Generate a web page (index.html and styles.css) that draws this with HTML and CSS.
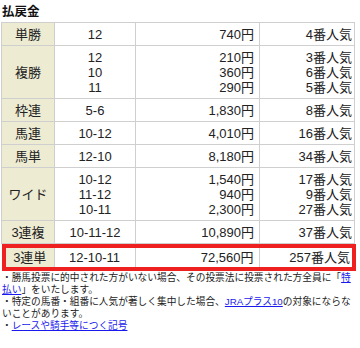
FILE: index.html
```html
<!DOCTYPE html>
<html lang="ja">
<head>
<meta charset="utf-8">
<title>払戻金</title>
<link rel="stylesheet" href="styles.css">
</head>
<body>
<div class="wrap">
  <h2 class="title">払戻金</h2>
  <table class="pay">
    <colgroup><col class="c1"><col class="c2"><col class="c3"><col class="c4"></colgroup>
    <tr><th>単勝</th><td class="num">12</td><td class="yen">740円</td><td class="pop">4番人気</td></tr>
    <tr><th>複勝</th><td class="num">12<br>10<br>11</td><td class="yen">210円<br>360円<br>290円</td><td class="pop">3番人気<br>6番人気<br>5番人気</td></tr>
    <tr><th>枠連</th><td class="num">5-6</td><td class="yen">1,830円</td><td class="pop">8番人気</td></tr>
    <tr><th>馬連</th><td class="num">10-12</td><td class="yen">4,010円</td><td class="pop">16番人気</td></tr>
    <tr><th>馬単</th><td class="num">12-10</td><td class="yen">8,180円</td><td class="pop">34番人気</td></tr>
    <tr><th>ワイド</th><td class="num">10-12<br>11-12<br>10-11</td><td class="yen">1,540円<br>940円<br>2,300円</td><td class="pop">17番人気<br>9番人気<br>27番人気</td></tr>
    <tr><th>3連複</th><td class="num">10-11-12</td><td class="yen">10,890円</td><td class="pop">37番人気</td></tr>
  </table>
  <div class="hit">
    <table class="pay inner">
      <colgroup><col class="d1"><col class="c2"><col class="c3"><col class="d4"></colgroup>
      <tr><th>3連単</th><td class="num">12-10-11</td><td class="yen">72,560円</td><td class="pop">257番人気</td></tr>
    </table>
  </div>
  <div class="notes">
    <p>・勝馬投票に的中された方がいない場合、その投票法に投票された方全員に「<a href="#">特払い</a>」をいたします。</p>
    <p>・特定の馬番・組番に人気が著しく集中した場合、<a href="#">JRAプラス10</a>の対象にならないことがあります。</p>
    <p>・<a href="#">レースや騎手等につく記号</a></p>
  </div>
</div>
</body>
</html>
```
FILE: styles.css
```css
html, body {
  margin: 0;
  padding: 0;
  background: #ffffff;
}
body {
  font-family: "Liberation Sans", "Noto Sans CJK JP", sans-serif;
  color: #222222;
}
.wrap {
  padding: 0 1px;
  width: 356px;
}
.title {
  margin: 0;
  padding: 5px 1px 2px;
  font-size: 12.5px;
  line-height: 15px;
  font-weight: bold;
  color: #111111;
}
.pay {
  border-collapse: collapse;
  table-layout: fixed;
  width: 354px;
  font-size: 13px;
  line-height: 15px;
}
.pay th, .pay td {
  border: 1px solid #cfcfcf;
  padding: 3.5px 4px;
  vertical-align: middle;
}
.pay th {
  background: #edebd2;
  font-weight: normal;
  text-align: center;
  color: #222222;
}
.pay .num { text-align: center; }
.pay .yen { text-align: right; padding-right: 5px; }
.pay .pop { text-align: right; padding-right: 2px; }
.c1 { width: 53px; }
.c2 { width: 81px; }
.c3 { width: 124px; }
.c4 { width: 95px; }
.hit {
  margin-left: 1px;
  width: 354px;
  box-sizing: border-box;
  border: 4px solid #ee2020;
}
.pay.inner {
  width: 346px;
}
.pay.inner th, .pay.inner td {
  padding-top: 2px;
  padding-bottom: 2px;
  border-top: none;
  border-bottom: none;
}
.pay.inner th { border-left: none; }
.pay.inner td.pop { border-right: none; }
.d1 { width: 48px; }
.d4 { width: 93px; }
.notes {
  margin-top: 1px;
  font-size: 9.7px;
  line-height: 12px;
  padding-left: 1px;
  color: #222222;
}
.notes p {
  margin: 0;
}
.notes a {
  color: #1a1aee;
  text-decoration: underline;
}
```
